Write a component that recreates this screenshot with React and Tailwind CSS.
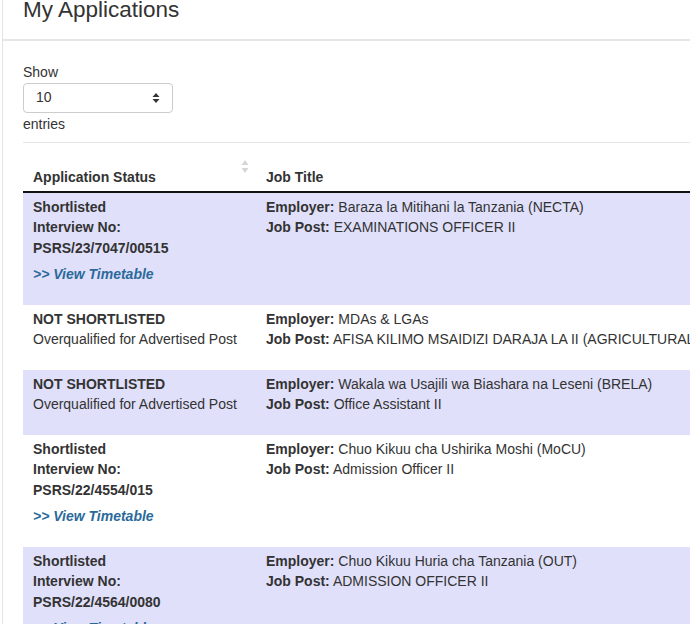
const rows = [
  {
    shade: true,
    status: 'Shortlisted',
    interview: 'PSRS/23/7047/00515',
    employer: 'Baraza la Mitihani la Tanzania (NECTA)',
    post: 'EXAMINATIONS OFFICER II',
  },
  {
    shade: false,
    status: 'NOT SHORTLISTED',
    reason: 'Overqualified for Advertised Post',
    employer: 'MDAs & LGAs',
    post: 'AFISA KILIMO MSAIDIZI DARAJA LA II (AGRICULTURAL FIELD OFFICER II)',
  },
  {
    shade: true,
    status: 'NOT SHORTLISTED',
    reason: 'Overqualified for Advertised Post',
    employer: 'Wakala wa Usajili wa Biashara na Leseni (BRELA)',
    post: 'Office Assistant II',
  },
  {
    shade: false,
    status: 'Shortlisted',
    interview: 'PSRS/22/4554/015',
    employer: 'Chuo Kikuu cha Ushirika Moshi (MoCU)',
    post: 'Admission Officer II',
  },
  {
    shade: true,
    status: 'Shortlisted',
    interview: 'PSRS/22/4564/0080',
    employer: 'Chuo Kikuu Huria cha Tanzania (OUT)',
    post: 'ADMISSION OFFICER II',
  },
];

const SortIcon = () => (
  <svg width="8" height="15" viewBox="0 0 8 15" className="absolute right-[7px] top-[-8px]">
    <path d="M4 1 L7.5 6 L0.5 6 Z" fill="#d6d6d6" />
    <path d="M4 14 L7.5 9 L0.5 9 Z" fill="#d6d6d6" />
  </svg>
);

const Row = ({ row }) => (
  <div className={`flex ${row.shade ? 'bg-[#e0e0fa]' : 'bg-white'}`}>
    <div className="w-[233px] shrink-0 px-[10px] pt-[4px] pb-[5px]">
      <div className="mb-[15px]">
        {row.interview ? (
          <>
            <div className="font-bold">{row.status}</div>
            <div className="font-bold">Interview No:</div>
            <div className="font-bold">{row.interview}</div>
            <div className="mt-[6px] font-bold italic text-[#2a6a9a]">&gt;&gt; View Timetable</div>
          </>
        ) : (
          <>
            <div className="font-bold">{row.status}</div>
            <div className="whitespace-nowrap">{row.reason}</div>
          </>
        )}
      </div>
    </div>
    <div className="flex-1 px-[10px] pt-[4px] pb-[5px] whitespace-nowrap">
      <div>
        <span className="font-bold">Employer:</span> {row.employer}
      </div>
      <div>
        <span className="font-bold">Job Post:</span> {row.post}
      </div>
    </div>
  </div>
);

export default function App() {
  return (
    <div
      className="w-[690px] h-[624px] overflow-hidden bg-white text-[14px] leading-[20.5px] text-[#333]"
      style={{ fontFamily: '"Liberation Sans", Arial, sans-serif' }}
    >
      <div className="ml-[2px] w-[1000px] min-h-[624px] border-l border-[#e3e3e3]">
        <div className="flex h-[41px] items-start border-b-2 border-[#e6e6e6] pl-[20px]">
          <h1 className="relative top-[-4px] text-[22.5px] leading-[28px] font-normal text-[#333]">My Applications</h1>
        </div>
        <div className="pl-[20px] pt-[21px]">
          <div>Show</div>
          <div className="flex h-[30px] w-[150px] items-center justify-between rounded-[4px] border border-[#ccc] pl-[12px] pr-[12px]">
            <span>10</span>
            <svg width="8" height="12" viewBox="0 0 8 12">
              <path d="M4 1 L7.5 5 L0.5 5 Z" fill="#333" />
              <path d="M4 11 L7.5 7 L0.5 7 Z" fill="#333" />
            </svg>
          </div>
          <div className="mt-[1px]">entries</div>
          <div className="mt-[8px] border-t border-[#e6e6e6]" />
          <div className="mt-[24px] flex border-b-2 border-[#111] font-bold">
            <div className="relative w-[233px] shrink-0 px-[10px] pb-[3px]">
              Application Status
              <SortIcon />
            </div>
            <div className="flex-1 px-[10px] pb-[3px]">Job Title</div>
          </div>
          {rows.map((row, i) => (
            <Row key={i} row={row} />
          ))}
        </div>
      </div>
    </div>
  );
}
